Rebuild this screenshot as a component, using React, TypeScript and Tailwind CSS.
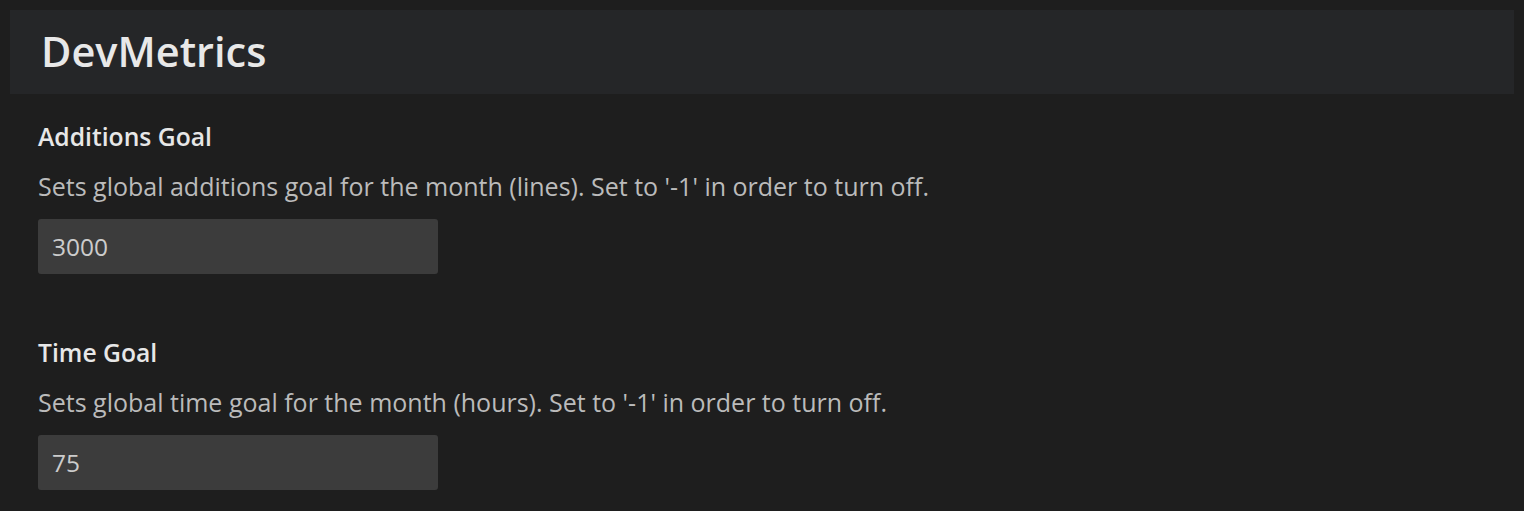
import { useState } from 'react';

interface GoalSettingProps {
  title: string;
  description: string;
  defaultValue: string;
}

function GoalSetting({ title, description, defaultValue }: GoalSettingProps) {
  const [value, setValue] = useState(defaultValue);

  return (
    <div className="flex flex-col">
      <h2 className="text-[24.7px] leading-[34px] font-semibold text-[#e7e7e7]">{title}</h2>
      <p className="mt-[15px] text-[25px] leading-[34px] text-[#bbbbbb]">{description}</p>
      <input
        value={value}
        onChange={(e) => setValue(e.target.value)}
        className="mt-[16px] w-[400px] h-[55px] rounded-[3px] bg-[#3c3c3c] px-[14px] text-[24.5px] text-[#cccccc] outline-none"
      />
    </div>
  );
}

export default function App() {
  return (
    <div
      className="min-h-screen bg-[#1e1e1e] p-[10px]"
      style={{ fontFamily: '"Open Sans", "Noto Sans", sans-serif' }}
    >
      <header className="h-[84px] flex items-center pl-[31px] bg-[#252628]">
        <h1 className="text-[41.5px] leading-none font-semibold text-[#e8e8e8]">DevMetrics</h1>
      </header>
      <div className="pl-[28px] pt-[26px] flex flex-col gap-[62px]">
        <GoalSetting
          title="Additions Goal"
          description="Sets global additions goal for the month (lines). Set to '-1' in order to turn off."
          defaultValue="3000"
        />
        <GoalSetting
          title="Time Goal"
          description="Sets global time goal for the month (hours). Set to '-1' in order to turn off."
          defaultValue="75"
        />
      </div>
    </div>
  );
}
